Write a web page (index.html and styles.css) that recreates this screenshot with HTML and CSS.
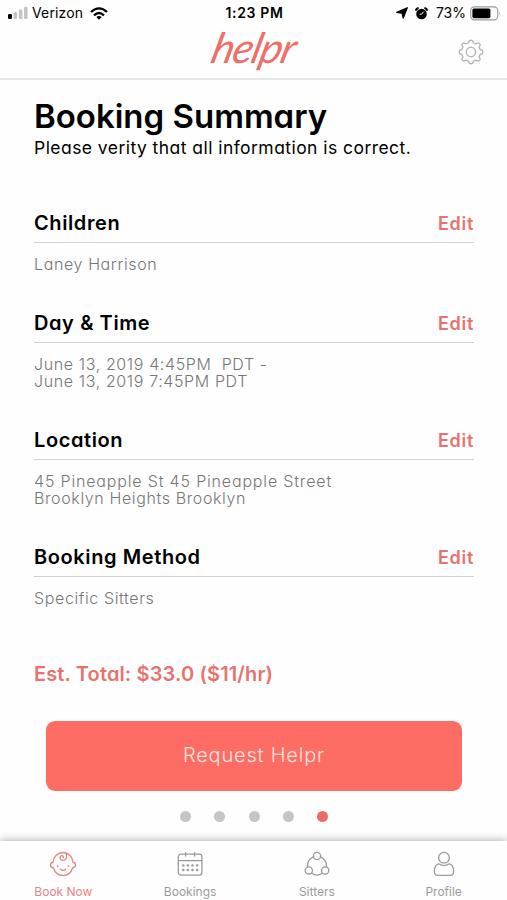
FILE: index.html
```
<!DOCTYPE html>
<html lang="en">
<head>
    <meta charset="UTF-8">
    <title>Booking Summary</title>
    <link rel="stylesheet" href="styles.css">
</head>
<body>
    <div class="status-bar">
        <div class="status-left">
            <svg class="signal" width="20" height="12" viewBox="0 0 20 12">
                <rect x="0" y="7" width="4" height="5" rx="1.2" fill="#000"/>
                <rect x="5.5" y="5" width="3.6" height="7" rx="1" fill="#c4c4c4"/>
                <rect x="10.8" y="2.5" width="3.6" height="9.5" rx="1" fill="#c4c4c4"/>
                <rect x="16" y="0" width="3.6" height="12" rx="1" fill="#c4c4c4"/>
            </svg>
            <span class="carrier">Verizon</span>
            <svg width="18" height="13" viewBox="0 0 18 13" fill="none" stroke="#000" stroke-width="2.3">
                <path d="M1 5 Q9 -2.2 17 5"/>
                <path d="M4 8.3 Q9 3.8 14 8.3"/>
                <path d="M6.3 10 Q9 7.8 11.7 10 L9 12.7 Z" fill="#000" stroke="none"/>
            </svg>
        </div>
        <div class="clock">1:23 PM</div>
        <div class="status-right">
            <svg width="12" height="12" viewBox="0 0 12 12"><path d="M11.3 .7 L7.2 11.2 L6 6.2 L.7 5.4 Z" fill="#000" stroke="#000" stroke-width="1.2" stroke-linejoin="round"/></svg>
            <svg class="alarm" width="13" height="13" viewBox="0 0 13 13" fill="none" stroke="#000">
                <circle cx="6.5" cy="7" r="5.3" fill="#000" stroke="none"/>
                <path d="M.9 3.8 Q1 1.4 3.6 1 M12.1 3.8 Q12 1.4 9.4 1" stroke-width="1.8"/>
                <path d="M8.6 4.8 L6.6 7.2 H4.6" stroke="#fff" stroke-width="1"/>
            </svg>
            <span class="percent">73%</span>
            <svg class="battery" width="31" height="15" viewBox="0 0 31 15">
                <rect x=".7" y=".9" width="27" height="13" rx="3.6" fill="none" stroke="#9a9a9a" stroke-width="1.1"/>
                <rect x="2.4" y="2.6" width="18" height="9.6" rx="1.6" fill="#000"/>
                <path d="M29.2 5.2 Q31 7.4 29.2 9.6 Z" fill="#9a9a9a"/>
            </svg>
        </div>
    </div>

    <header class="header">
        <div class="logo">helpr</div>
        <svg class="gear" width="26" height="26" viewBox="0 0 26 26" fill="none" stroke="#b5b5b5" stroke-width="1.4" stroke-linejoin="round">
            <path d="M11.4 1.6 Q13 .8 14.6 1.6 L15.4 3.9 Q16.6 4.2 17.8 4.9 L20.2 3.8 Q21.8 4.4 22.2 5.8 L21.1 8.2 Q21.8 9.4 22.1 10.6 L24.4 11.4 Q25.2 13 24.4 14.6 L22.1 15.4 Q21.8 16.6 21.1 17.8 L22.2 20.2 Q21.6 21.8 20.2 22.2 L17.8 21.1 Q16.6 21.8 15.4 22.1 L14.6 24.4 Q13 25.2 11.4 24.4 L10.6 22.1 Q9.4 21.8 8.2 21.1 L5.8 22.2 Q4.2 21.6 3.8 20.2 L4.9 17.8 Q4.2 16.6 3.9 15.4 L1.6 14.6 Q.8 13 1.6 11.4 L3.9 10.6 Q4.2 9.4 4.9 8.2 L3.8 5.8 Q4.4 4.2 5.8 3.8 L8.2 4.9 Q9.4 4.2 10.6 3.9 Z"/>
            <circle cx="13" cy="13" r="4.7"/>
        </svg>
    </header>

    <main class="content">
        <h1>Booking Summary</h1>
        <p class="subtitle">Please verity that all information is correct.</p>

        <section class="section">
            <div class="section-head">
                <h2>Children</h2>
                <a class="edit">Edit</a>
            </div>
            <p>Laney Harrison</p>
        </section>
        <section class="section">
            <div class="section-head">
                <h2>Day &amp; Time</h2>
                <a class="edit">Edit</a>
            </div>
            <p>June 13, 2019 4:45PM&nbsp; PDT -<br>June 13, 2019 7:45PM PDT</p>
        </section>
        <section class="section">
            <div class="section-head">
                <h2>Location</h2>
                <a class="edit">Edit</a>
            </div>
            <p><span class="street">45 Pineapple St 45 Pineapple Street</span><br>Brooklyn Heights Brooklyn</p>
        </section>
        <section class="section">
            <div class="section-head">
                <h2>Booking Method</h2>
                <a class="edit">Edit</a>
            </div>
            <p>Specific Sitters</p>
        </section>

        <div class="total">Est. Total: $33.0 ($11/hr)</div>
        <button type="button" class="request">Request Helpr</button>
        <div class="dots">
            <span class="dot"></span>
            <span class="dot"></span>
            <span class="dot"></span>
            <span class="dot"></span>
            <span class="dot active"></span>
        </div>
    </main>

    <nav class="tabs">
        <a class="tab active">
            <svg width="28" height="26" viewBox="0 0 28 26" fill="none" stroke="currentColor" stroke-width="1.3" stroke-linecap="round">
                <path d="M3.9 11.5 C4.6 5.5 8.6 1.5 14 1.5 S23.4 5.5 24.1 11.5 C27.4 11.7 27.4 16.6 23.6 16.8 C22.2 21.6 18.6 24.6 14 24.6 S5.8 21.6 4.4 16.8 C.6 16.6 .6 11.7 3.9 11.5 Z"/>
                <path d="M16.8 1.9 C18.6 5.2 17.3 9.4 14 9.4 C11.2 9.4 10.3 6.6 11.6 5.2 C13 3.9 15 5.2 14.2 6.8"/>
                <path d="M11.4 18.2 Q14 20.4 16.6 18.2"/>
                <circle cx="8.6" cy="15.2" r=".9" fill="currentColor" stroke="none"/>
                <circle cx="19.4" cy="15.2" r=".9" fill="currentColor" stroke="none"/>
            </svg>
            <span>Book Now</span>
        </a>
        <a class="tab">
            <svg width="28" height="26" viewBox="0 0 28 26" fill="none" stroke="currentColor" stroke-width="1.3" stroke-linecap="round">
                <rect x="2.3" y="3.2" width="23.6" height="21" rx="2.8"/>
                <path d="M2.3 9.6 H25.9 M9.6 1.6 V5 M18.6 1.6 V5"/>
                <path d="M7.2 14.4 h.2 M11.8 14.4 h.2 M16.4 14.4 h.2 M21 14.4 h.2 M7.2 19 h.2 M11.8 19 h.2 M16.4 19 h.2 M21 19 h.2" stroke-width="2.4"/>
            </svg>
            <span>Bookings</span>
        </a>
        <a class="tab">
            <svg width="28" height="26" viewBox="0 0 28 26" fill="none" stroke="currentColor" stroke-width="1.3">
                <circle cx="14" cy="5" r="3.6"/>
                <circle cx="5.8" cy="19.4" r="3.6"/>
                <circle cx="22.2" cy="19.4" r="3.6"/>
                <path d="M10.4 5.8 C6.4 7.6 4.2 11.4 4.5 16 M17.6 5.8 C21.6 7.6 23.8 11.4 23.5 16 M8.4 22 Q14 26.4 19.6 22"/>
            </svg>
            <span>Sitters</span>
        </a>
        <a class="tab">
            <svg width="28" height="26" viewBox="0 0 28 26" fill="none" stroke="currentColor" stroke-width="1.3" stroke-linejoin="round">
                <circle cx="14" cy="6.8" r="5.4"/>
                <path d="M9 12.8 Q14 16.4 19 12.8 C22.2 13.2 23.6 16 23.6 20.4 C23.6 23 22.4 24.3 20 24.3 H8 C5.6 24.3 4.4 23 4.4 20.4 C4.4 16 5.8 13.2 9 12.8 Z"/>
            </svg>
            <span>Profile</span>
        </a>
    </nav>
</body>
</html>
```
FILE: styles.css
```
* {
    box-sizing: border-box;
}
body {
    font-family: Inter, "Open Sans", sans-serif;
    font-feature-settings: "cv11";
    margin: 0;
    height: 900px;
    display: flex;
    flex-direction: column;
    background-color: #fefefe;
    color: #000;
    overflow: hidden;
}
h1, h2, p {
    margin: 0;
}
svg {
    flex: none;
}
.status-bar {
    display: grid;
    grid-template-columns: 1fr auto 1fr;
    align-items: center;
    height: 26px;
    padding: 0 6px 0 8px;
    font-feature-settings: normal;
    font-size: 14px;
    line-height: 26px;
}
.status-left, .status-right {
    display: flex;
    align-items: center;
}
.carrier {
    margin: 0 7px 0 4px;
    letter-spacing: 0.15px;
}
.clock {
    font-weight: 600;
    letter-spacing: 0.65px;
}
.status-right {
    justify-content: flex-end;
}
.alarm {
    margin: 0 8px 0 7px;
}
.battery {
    margin-left: 4px;
}
.header {
    display: grid;
    grid-template-columns: 1fr auto 1fr;
    height: 54px;
    border-bottom: 2px solid #e6e6e6;
}
.logo {
    grid-column: 2;
    font-family: Lato, sans-serif;
    font-style: italic;
    font-size: 42px;
    line-height: 42px;
    letter-spacing: -1.2px;
    color: #ee6f69;
    transform: skewX(-14deg);
}
.gear {
    justify-self: end;
    align-self: center;
    margin-right: 23px;
}
.content {
    flex: 1;
    display: flex;
    flex-direction: column;
    padding: 16px 33px 0 34px;
}
h1 {
    font-size: 33px;
    font-weight: 600;
    line-height: 40px;
}
.subtitle {
    font-size: 17.5px;
    line-height: 24px;
    letter-spacing: 0.45px;
    margin-bottom: 44px;
}
.section {
    margin-bottom: 32px;
}
.section-head {
    display: flex;
    justify-content: space-between;
    align-items: center;
    height: 39px;
    border-bottom: 1px solid #d2d2d2;
}
h2 {
    font-size: 20px;
    font-weight: 600;
    letter-spacing: 0.6px;
}
.edit {
    font-size: 18px;
    font-weight: 600;
    letter-spacing: 0.7px;
    color: #e8736e;
}
.section p {
    padding-top: 13px;
    font-size: 16px;
    font-weight: 300;
    line-height: 16.4px;
    letter-spacing: 0.62px;
    color: #777;
}
.section .street {
    letter-spacing: 0.83px;
}
.total {
    margin-top: 23px;
    font-size: 20px;
    font-weight: 600;
    line-height: 26px;
    letter-spacing: 0.13px;
    color: #e8736e;
}
.request {
    height: 70px;
    margin: 34px 12px 0;
    padding: 0 0 3px;
    border: none;
    border-radius: 9px;
    background-color: #fd6d63;
    color: #ffe4e0;
    font-family: inherit;
    font-feature-settings: inherit;
    font-size: 20px;
    font-weight: 300;
    letter-spacing: 0.8px;
}
.dots {
    display: flex;
    justify-content: center;
    gap: 23.2px;
    margin-top: 19.5px;
}
.dot {
    width: 11px;
    height: 11px;
    border-radius: 50%;
    background-color: #c5c5c5;
}
.dot.active {
    background-color: #ee6b66;
}
.tabs {
    display: flex;
    height: 59px;
    background-color: #fefefe;
    box-shadow: 0 -1px 8px rgba(0, 0, 0, 0.3);
}
.tab {
    flex: 1;
    display: flex;
    flex-direction: column;
    align-items: center;
    padding-top: 10px;
    font-size: 12px;
    line-height: 16px;
    color: #9b9b9b;
}
.tab span {
    margin-top: 7px;
}
.tab.active {
    color: #e8837f;
}
```
